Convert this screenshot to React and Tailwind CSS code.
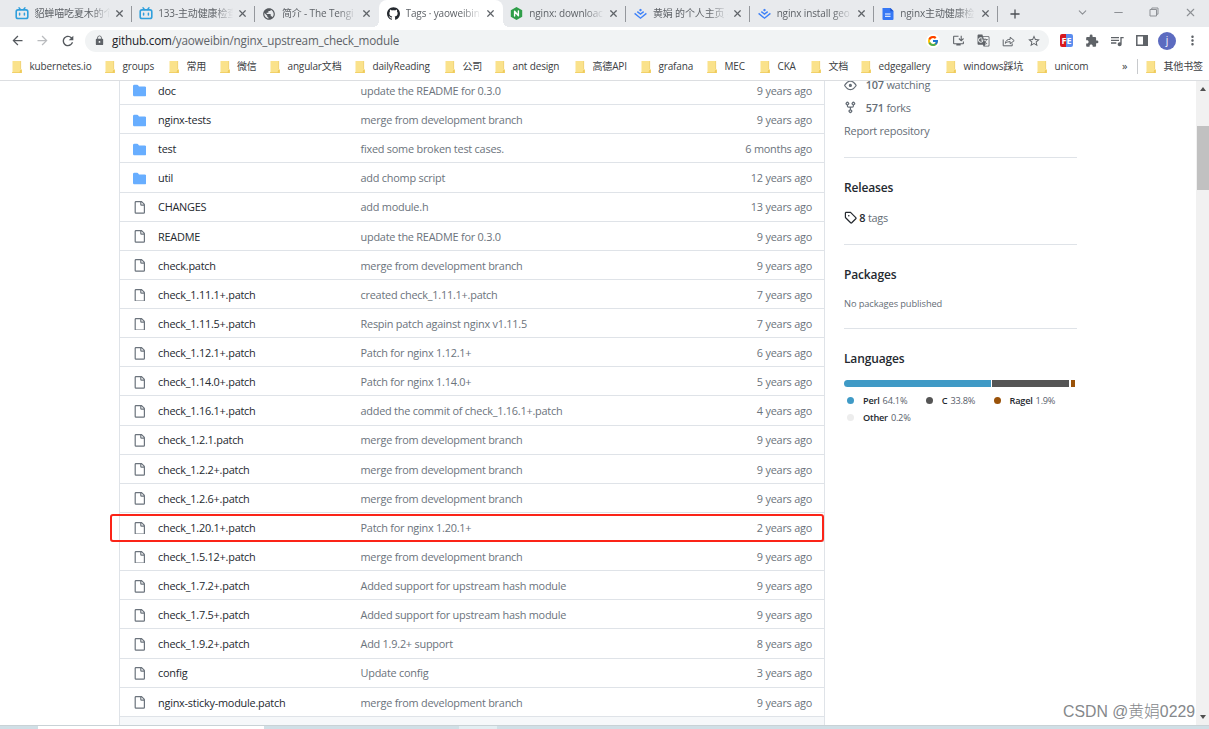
import { MdArrowBack, MdArrowForward, MdRefresh, MdLock, MdPublic, MdExtension, MdQueueMusic, MdMoreVert, MdStarBorder, MdGTranslate, MdOutlineInstallDesktop } from 'react-icons/md';
import { SiGithub } from 'react-icons/si';
import { FcGoogle } from 'react-icons/fc';
import { ChevronDown, Minus, Plus, X } from 'lucide-react';
import clsx from 'clsx';

const BilibiliIcon = () => (
  <svg width="14" height="13" viewBox="0 0 14 13" fill="none" stroke="#2f9fdc" strokeLinecap="round">
    <path d="M4 .8 5.5 2.5M10 .8 8.5 2.5" strokeWidth="1.3" />
    <rect x="1.2" y="2.9" width="11.6" height="8.6" rx="1.8" strokeWidth="1.6" />
    <path d="M4.6 6.3v1.8M9.4 6.3v1.8" strokeWidth="1.5" />
  </svg>
);

const NginxIcon = () => (
  <svg width="13" height="13" viewBox="0 0 13 13">
    <path d="M6.5 0 12.2 3.2v6.6L6.5 13 .8 9.8V3.2z" fill="#2f9e49" />
    <path d="M4.6 9V4.2L8.4 8.8V4" fill="none" stroke="#fff" strokeWidth="1.4" strokeLinecap="round" strokeLinejoin="round" />
  </svg>
);

const JuejinIcon = () => (
  <svg width="13" height="12" viewBox="0 0 13 12" fill="none" stroke="#3f82f8" strokeWidth="1.4">
    <path d="M6.5 .8 8.1 2.1 6.5 3.4 4.9 2.1z" fill="#3f82f8" stroke="none" />
    <path d="M3.3 3.6 6.5 6.1 9.7 3.6M.6 5.4 6.5 10.2 12.4 5.4" />
  </svg>
);

const DocIcon = () => (
  <svg width="12" height="12" viewBox="0 0 12 12">
    <path d="M1 0h7.5L11.5 3v8a1 1 0 0 1-1 1H1.5a1 1 0 0 1-1-1V.5z" fill="#3577f5" />
    <path d="M8.3 0 11.5 3.2H8.3z" fill="#1f54c9" />
    <path d="M3 6h5.5M3 8.3h5.5" stroke="#fff" strokeWidth="1" />
  </svg>
);

const GlobeIcon = () => <MdPublic size={14} className="text-[#55595e]" />;
const GithubIcon = () => <SiGithub size={13} className="text-[#24292f]" />;

const BookmarkFolder = () => (
  <svg width="11" height="12" viewBox="0 0 11 12" className="shrink-0">
    <path d="M.5 0h8v8.3h1.3V12H.5z" fill="#fae28b" />
    <path d="M8.3 0h.8v8h-.8zM0 11.2h7.5l.8-2.4h1.5V12H0z" fill="#efcb5c" />
  </svg>
);

const ShareIcon = () => (
  <svg width="13" height="12" viewBox="0 0 13 12" fill="none" stroke="#5f6368" strokeWidth="1">
    <path d="M1.2 4.5v6.3h9V8.5" />
    <path d="M3.4 8.3c.3-2.7 2-4 4.8-4V2.2l4 3.4-4 3.3V6.7c-2 0-3.5.3-4.8 1.6z" strokeLinejoin="round" />
  </svg>
);

// 16px octicons
const octicons = {
  file: 'M2 1.75C2 .784 2.784 0 3.75 0h6.586c.464 0 .909.184 1.237.513l2.914 2.914c.329.328.513.773.513 1.237v9.586A1.75 1.75 0 0 1 13.25 16h-9.5A1.75 1.75 0 0 1 2 14.25Zm1.75-.25a.25.25 0 0 0-.25.25v12.5c0 .138.112.25.25.25h9.5a.25.25 0 0 0 .25-.25V6h-2.75A1.75 1.75 0 0 1 9 4.25V1.5Zm6.75.062V4.25c0 .138.112.25.25.25h2.688l-.011-.013-2.914-2.914-.013-.011Z',
  folder: 'M1.75 1A1.75 1.75 0 0 0 0 2.75v10.5C0 14.216.784 15 1.75 15h12.5A1.75 1.75 0 0 0 16 13.25v-8.5A1.75 1.75 0 0 0 14.25 3H7.5a.25.25 0 0 1-.2-.1l-.9-1.2C6.07 1.26 5.55 1 5 1H1.75Z',
  eye: 'M8 2c1.981 0 3.671.992 4.933 2.078 1.27 1.091 2.187 2.345 2.637 3.023a1.62 1.62 0 0 1 0 1.798c-.45.678-1.367 1.932-2.637 3.023C11.67 13.008 9.981 14 8 14c-1.981 0-3.671-.992-4.933-2.078C1.797 10.83.88 9.576.43 8.898a1.62 1.62 0 0 1 0-1.798c.45-.677 1.367-1.931 2.637-3.022C4.33 2.992 6.019 2 8 2ZM1.679 7.932a.12.12 0 0 0 0 .136c.411.622 1.241 1.75 2.366 2.717C5.176 11.758 6.527 12.5 8 12.5c1.473 0 2.825-.742 3.955-1.715 1.124-.967 1.954-2.096 2.366-2.717a.12.12 0 0 0 0-.136c-.412-.621-1.242-1.75-2.366-2.717C10.824 4.242 9.473 3.5 8 3.5c-1.473 0-2.825.742-3.955 1.715-1.124.967-1.954 2.096-2.366 2.717ZM8 10a2 2 0 1 1-.001-3.999A2 2 0 0 1 8 10Z',
  fork: 'M5 5.372v.878c0 .414.336.75.75.75h4.5a.75.75 0 0 0 .75-.75v-.878a2.25 2.25 0 1 1 1.5 0v.878a2.25 2.25 0 0 1-2.25 2.25h-1.5v2.128a2.251 2.251 0 1 1-1.5 0V8.5h-1.5A2.25 2.25 0 0 1 3.5 6.25v-.878a2.25 2.25 0 1 1 1.5 0ZM5 3.25a.75.75 0 1 0-1.5 0 .75.75 0 0 0 1.5 0Zm6.75.75a.75.75 0 1 0 0-1.5.75.75 0 0 0 0 1.5Zm-3 8.75a.75.75 0 1 0-1.5 0 .75.75 0 0 0 1.5 0Z',
  tag: 'M1 7.775V2.75C1 1.784 1.784 1 2.75 1h5.025c.464 0 .91.184 1.238.513l6.25 6.25a1.75 1.75 0 0 1 0 2.474l-5.026 5.026a1.75 1.75 0 0 1-2.474 0l-6.25-6.25A1.752 1.752 0 0 1 1 7.775Zm1.5 0c0 .066.026.13.073.177l6.25 6.25a.25.25 0 0 0 .354 0l5.025-5.025a.25.25 0 0 0 0-.354l-6.25-6.25a.25.25 0 0 0-.177-.073H2.75a.25.25 0 0 0-.25.25ZM6 5a1 1 0 1 1 0 2 1 1 0 0 1 0-2Z',
};

const Octicon = ({ name, size = 12.8, className }) => (
  <svg width={size} height={size} viewBox="0 0 16 16" fill="currentColor" className={clsx('shrink-0', className)}>
    <path d={octicons[name]} />
  </svg>
);

const tabs = [
  { icon: BilibiliIcon, title: '貂蝉喵吃夏木的个' },
  { icon: BilibiliIcon, title: '133-主动健康检查' },
  { icon: GlobeIcon, title: '简介 - The Tengi' },
  { icon: GithubIcon, title: 'Tags · yaoweibin', active: true },
  { icon: NginxIcon, title: 'nginx: downloac' },
  { icon: JuejinIcon, title: '黄娟 的个人主页 -' },
  { icon: JuejinIcon, title: 'nginx install geo' },
  { icon: DocIcon, title: 'nginx主动健康检' },
];

const bookmarks = [
  { name: 'kubernetes.io', width: 'w-[93px]' },
  { name: 'groups', width: 'w-[64px]' },
  { name: '常用', width: 'w-[50.5px]' },
  { name: '微信', width: 'w-[50.5px]' },
  { name: 'angular文档', width: 'w-[85px]' },
  { name: 'dailyReading', width: 'w-[90px]' },
  { name: '公司', width: 'w-[50px]' },
  { name: 'ant design', width: 'w-[80px]' },
  { name: '高德API', width: 'w-[66px]' },
  { name: 'grafana', width: 'w-[66px]' },
  { name: 'MEC', width: 'w-[53px]' },
  { name: 'CKA', width: 'w-[51px]' },
  { name: '文档', width: 'w-[50px]' },
  { name: 'edgegallery', width: 'w-[85px]' },
  { name: 'windows踩坑', width: 'w-[91px]' },
  { name: 'unicom', width: 'w-[85px]' },
];

const files = [
  { name: 'doc', message: 'update the README for 0.3.0', age: '9 years ago', dir: true },
  { name: 'nginx-tests', message: 'merge from development branch', age: '9 years ago', dir: true },
  { name: 'test', message: 'fixed some broken test cases.', age: '6 months ago', dir: true },
  { name: 'util', message: 'add chomp script', age: '12 years ago', dir: true },
  { name: 'CHANGES', message: 'add module.h', age: '13 years ago' },
  { name: 'README', message: 'update the README for 0.3.0', age: '9 years ago' },
  { name: 'check.patch', message: 'merge from development branch', age: '9 years ago' },
  { name: 'check_1.11.1+.patch', message: 'created check_1.11.1+.patch', age: '7 years ago' },
  { name: 'check_1.11.5+.patch', message: 'Respin patch against nginx v1.11.5', age: '7 years ago' },
  { name: 'check_1.12.1+.patch', message: 'Patch for nginx 1.12.1+', age: '6 years ago' },
  { name: 'check_1.14.0+.patch', message: 'Patch for nginx 1.14.0+', age: '5 years ago' },
  { name: 'check_1.16.1+.patch', message: 'added the commit of check_1.16.1+.patch', age: '4 years ago' },
  { name: 'check_1.2.1.patch', message: 'merge from development branch', age: '9 years ago' },
  { name: 'check_1.2.2+.patch', message: 'merge from development branch', age: '9 years ago' },
  { name: 'check_1.2.6+.patch', message: 'merge from development branch', age: '9 years ago' },
  { name: 'check_1.20.1+.patch', message: 'Patch for nginx 1.20.1+', age: '2 years ago', marked: true },
  { name: 'check_1.5.12+.patch', message: 'merge from development branch', age: '9 years ago' },
  { name: 'check_1.7.2+.patch', message: 'Added support for upstream hash module', age: '9 years ago' },
  { name: 'check_1.7.5+.patch', message: 'Added support for upstream hash module', age: '9 years ago' },
  { name: 'check_1.9.2+.patch', message: 'Add 1.9.2+ support', age: '8 years ago' },
  { name: 'config', message: 'Update config', age: '3 years ago' },
  { name: 'nginx-sticky-module.patch', message: 'merge from development branch', age: '9 years ago' },
];

const Tab = ({ tab }) => {
  const Icon = tab.icon;
  return (
    <div
      className={clsx(
        'relative w-[123.7px] h-[27px] shrink-0 flex items-center pl-[7px] pr-[7px]',
        tab.active && 'bg-white rounded-t-lg'
      )}
    >
      {tab.active && (
        <>
          <div className="absolute -left-[6px] bottom-0 size-[6px] bg-[radial-gradient(circle_at_top_left,#e8eaed_6px,white_6px)]" />
          <div className="absolute -right-[6px] bottom-0 size-[6px] bg-[radial-gradient(circle_at_top_right,#e8eaed_6px,white_6px)]" />
        </>
      )}
      <span className="w-[14px] shrink-0 flex justify-center"><Icon /></span>
      <span className="ml-[5.5px] w-[77px] whitespace-nowrap text-[10px] tracking-[-0.14px] text-[#5f6368] [mask-image:linear-gradient(to_right,black_72%,transparent_98%)]">
        {tab.title}
      </span>
      <X size={11} strokeWidth={2.6} className="ml-auto shrink-0 text-[#5f6368]" />
    </div>
  );
};

const TabStrip = () => (
  <div className="h-[27px] bg-[#e8eaed] flex items-center pl-[8px]">
    {tabs.map((tab, i) => (
      <div key={i} className="flex items-center">
        <Tab tab={tab} />
        {/* no divider next to the active tab */}
        <div className={clsx('w-px h-[16px] -ml-px', tab.active || tabs[i + 1]?.active ? 'bg-transparent' : 'bg-[#94979c]')} />
      </div>
    ))}
    <Plus size={14} strokeWidth={2.2} className="ml-[10px] text-[#4b4f54]" />
    <div className="ml-auto flex items-center text-[#8d9095] -mt-[3px] pr-[12px]">
      <ChevronDown size={13} strokeWidth={2} className="mr-[23px]" />
      <Minus size={13} strokeWidth={2} className="mr-[24px]" />
      <svg width="10" height="10" viewBox="0 0 10 10" fill="none" stroke="currentColor" className="mr-[25px]">
        <path d="M1 2.5h6.5v6.5H1zM2.8 2.5V1H9v6.2H7.5" />
      </svg>
      <X size={13} strokeWidth={2} />
    </div>
  </div>
);

const Toolbar = () => (
  <div className="h-[27px] bg-white flex items-center pl-[10px] text-[#5f6368]">
    <MdArrowBack size={15} className="text-[#55595e]" />
    <MdArrowForward size={15} className="ml-[10px] text-[#b9bbbe]" />
    <MdRefresh size={16} className="ml-[10px] text-[#55595e]" />
    <div className="ml-[9px] w-[964px] h-[22px] rounded-full bg-[#f1f3f4] flex items-center pl-[8.5px] pr-[8px]">
      <MdLock size={11} />
      <span className="ml-[7.5px] text-[11.7px] tracking-[-0.18px] leading-none whitespace-nowrap">
        <span className="text-[#202124]">github.com</span>/yaoweibin/nginx_upstream_check_module
      </span>
      <div className="ml-auto flex items-center gap-[12px]">
        <div className="size-[14px] rounded-full bg-white flex items-center justify-center">
          <FcGoogle size={12} />
        </div>
        <MdOutlineInstallDesktop size={13} />
        <MdGTranslate size={13} />
        <ShareIcon />
        <MdStarBorder size={14} />
      </div>
    </div>
    <div className="ml-[11px] w-[13px] h-[13px] rounded-[2px] bg-linear-to-r from-[#d8191f] from-50% to-[#5b8def] to-50% text-white text-[9px] font-bold leading-[13px] text-center">
      FE
    </div>
    <MdExtension size={14} className="ml-[12px]" />
    <MdQueueMusic size={16} className="ml-[10px]" />
    <svg width="12" height="11" viewBox="0 0 12 11" className="ml-[11px]">
      <path d="M.8.8h10.4v9.4H.8z" fill="none" stroke="currentColor" strokeWidth="1.5" />
      <path d="M7 0h5v11H7z" fill="currentColor" />
    </svg>
    <div className="ml-[10px] size-[18px] rounded-full bg-[#5c6bc0] text-white text-[10px] leading-[17px] text-center">j</div>
    <MdMoreVert size={15} className="ml-[9px]" />
  </div>
);

const BookmarkBar = () => (
  <div className="h-[27px] bg-white border-b border-[#dcdee1] flex items-center pl-[12px] pb-px text-[10px] tracking-[-0.16px] text-[#3c4043] whitespace-nowrap">
    {bookmarks.map((b) => (
      <div key={b.name} className={clsx('shrink-0 flex items-center gap-[6.5px]', b.width)}>
        <BookmarkFolder />
        <span>{b.name}</span>
      </div>
    ))}
    <span className="w-[15px] text-[11px]">»</span>
    <div className="w-px h-[15px] bg-[#c8cacd]" />
    <div className="ml-[8px] flex items-center gap-[6.5px]">
      <BookmarkFolder />
      <span>其他书签</span>
    </div>
  </div>
);

const FileRow = ({ file }) => (
  <div className="relative h-[29.14px] shrink-0 border-b border-[#dfe3e8] flex items-center pt-[2px] pr-[12px] text-[#6b737c]">
    <div className="w-[38px] pl-[12.5px]">
      {file.dir
        ? <Octicon name="folder" size={13.2} className="text-[#68aeff]" />
        : <Octicon name="file" className="text-[#6b737c]" />}
    </div>
    <span className="w-[202.5px] text-[#24292f]">{file.name}</span>
    <span className="flex-1">{file.message}</span>
    <span>{file.age}</span>
    {file.marked && (
      <div className="absolute -left-[10px] right-0 top-px h-[28px] border-2 border-[#fb2418] rounded-[3px]" />
    )}
  </div>
);

const FileList = () => (
  <div className="ml-[119px] w-[706px] shrink-0 border-x border-[#dfe3e8] bg-[#f6f8fa] text-[10.9px] tracking-[-0.23px]">
    <div className="-mt-[5px] bg-white flex flex-col">
      {files.map((f) => <FileRow key={f.name} file={f} />)}
    </div>
  </div>
);

const Language = ({ color, name, value }) => (
  <span className="flex items-center">
    <span className={clsx('size-[7px] rounded-full mr-[9px]', color)} />
    <span className="font-semibold text-[#24292f] mr-[3px]">{name}</span>
    {value}
  </span>
);

const RepoSidebar = () => (
  <div className="ml-[19px] w-[233px] shrink-0 text-[10.9px] tracking-[-0.23px] leading-[18px] text-[#656d76]">
    <div className="-mt-[5px] flex items-center">
      <Octicon name="eye" className="mr-[9px]" />
      <span><b className="font-semibold">107</b> watching</span>
    </div>
    <div className="mt-[4.5px] flex items-center">
      <Octicon name="fork" className="mr-[9px]" />
      <span><b className="font-semibold">571</b> forks</span>
    </div>
    <div className="mt-[5px]">Report repository</div>

    <div className="mt-[17px] pt-[21px] border-t border-[#dfe3e8]">
      <h2 className="text-[12px] tracking-[-0.15px] font-semibold text-[#24292f]">Releases</h2>
      <div className="mt-[12px] flex items-center">
        <Octicon name="tag" className="mr-[2.5px] text-[#24292f]" />
        <span><b className="font-semibold text-[#24292f]">8</b> tags</span>
      </div>
    </div>

    <div className="mt-[17px] pt-[21px] border-t border-[#dfe3e8]">
      <h2 className="text-[12px] tracking-[-0.15px] font-semibold text-[#24292f]">Packages</h2>
      <div className="mt-[11px] text-[9.3px] tracking-[-0.1px]">No packages published</div>
    </div>

    <div className="mt-[15.5px] pt-[21px] border-t border-[#dfe3e8]">
      <h2 className="text-[12px] tracking-[-0.15px] font-semibold text-[#24292f]">Languages</h2>
      <div className="mt-[12px] w-[231px] h-[6.5px] flex gap-[1.5px] rounded-l-full overflow-hidden">
        <div className="w-[146.5px] bg-[#3f9ac6]" />
        <div className="flex-1 bg-[#555555]" />
        <div className="w-[4.5px] bg-[#9a5209]" />
      </div>
      <div className="mt-[5px] pl-[3px] flex flex-wrap text-[9.2px] leading-[17.5px] tracking-[-0.22px] text-[#57606a] gap-x-[18.5px]">
        <Language color="bg-[#3f9ac6]" name="Perl" value="64.1%" />
        <Language color="bg-[#555555]" name="C" value="33.8%" />
        <Language color="bg-[#9a5209]" name="Ragel" value="1.9%" />
        <Language color="bg-[#ededed]" name="Other" value="0.2%" />
      </div>
    </div>
  </div>
);

const Scrollbar = () => (
  <div className="ml-auto w-[13px] h-full bg-[#f1f1f1] flex flex-col items-center py-[6px]">
    <div className="border-x-[3px] border-x-transparent border-b-[4px] border-b-[#505050]" />
    <div className="mt-[35px] w-[12px] h-[64px] bg-[#c1c1c1]" />
    <div className="mt-auto border-x-[3px] border-x-transparent border-t-[4px] border-t-[#505050]" />
  </div>
);

function App() {
  return (
    <div className="relative w-[1209px] h-[729px] overflow-hidden flex flex-col bg-white font-['Open_Sans','Noto_Sans_CJK_SC',sans-serif]">
      <TabStrip />
      <Toolbar />
      <BookmarkBar />
      <div className="h-[643.5px] flex overflow-hidden">
        <FileList />
        <RepoSidebar />
        <Scrollbar />
      </div>
      {/* top edge of the desktop taskbar */}
      <div className="flex-1 flex bg-[#d0dfe6] border-t border-[#c9d2d6]">
        <div className="ml-[38px] w-[226px] bg-white" />
        <div className="ml-[195px] w-[38px] bg-[#e3eef2]" />
      </div>
      <div className="absolute right-[14px] bottom-[6px] text-[15.8px] leading-[22px] font-light text-[#85888b] font-['Liberation_Sans','Noto_Sans_CJK_SC',sans-serif]">
        CSDN @黄娟0229
      </div>
    </div>
  );
}

export default App;
